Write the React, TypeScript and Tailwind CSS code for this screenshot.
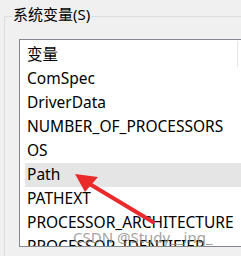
const rows = [
  'ComSpec',
  'DriverData',
  'NUMBER_OF_PROCESSORS',
  'OS',
  'Path',
  'PATHEXT',
  'PROCESSOR_ARCHITECTURE',
  'PROCESSOR_IDENTIFIER',
];

export default function App() {
  return (
    <div
      className="relative w-[241px] h-[256px] overflow-hidden bg-[#f0f0f0] text-[15.5px] text-black"
      style={{ fontFamily: '"Noto Sans", "Noto Sans CJK SC", sans-serif' }}
    >
      {/* Group box */}
      <div className="ml-[4px] mt-[16px] w-[300px] border-t border-l border-[#dcdcdc] h-[260px]">
        <div className="-mt-[13px] ml-[7px] w-fit bg-[#f0f0f0] px-[1px] text-[15px] leading-[20px]">
          系统变量(S)
        </div>

        {/* List view */}
        <div className="ml-[14px] mt-[15px] w-[260px] h-[208px] overflow-hidden bg-white border border-[#828790]">
          <div className="flex h-[27px] items-center pl-[7px] pt-[2px]">
            <span className="w-[210px]">变量</span>
            <span className="h-[26px] w-px -mt-[1px] bg-[#e5e5e5]" />
          </div>
          {rows.map((r) => (
            <div
              key={r}
              className={`ml-[5px] h-[24px] flex items-center pl-[2px] leading-none ${
                r === 'Path' ? 'bg-[#e5e5e5]' : ''
              }`}
            >
              {r}
            </div>
          ))}
        </div>
      </div>

      {/* Annotation arrow */}
      <svg className="absolute inset-0" width="241" height="256" viewBox="0 0 241 256">
        <line x1="153" y1="222" x2="88" y2="183" stroke="#ea2a2a" strokeWidth="4" strokeLinecap="round" />
        <polygon points="75,174 98,177 85,192" fill="#ea2a2a" />
      </svg>

      {/* Watermark */}
      <div className="absolute left-[73px] top-[228px] text-[15px] leading-[18px] text-[#8a8a8a]/80">
        CSDN @Study__ing_
      </div>
    </div>
  );
}
